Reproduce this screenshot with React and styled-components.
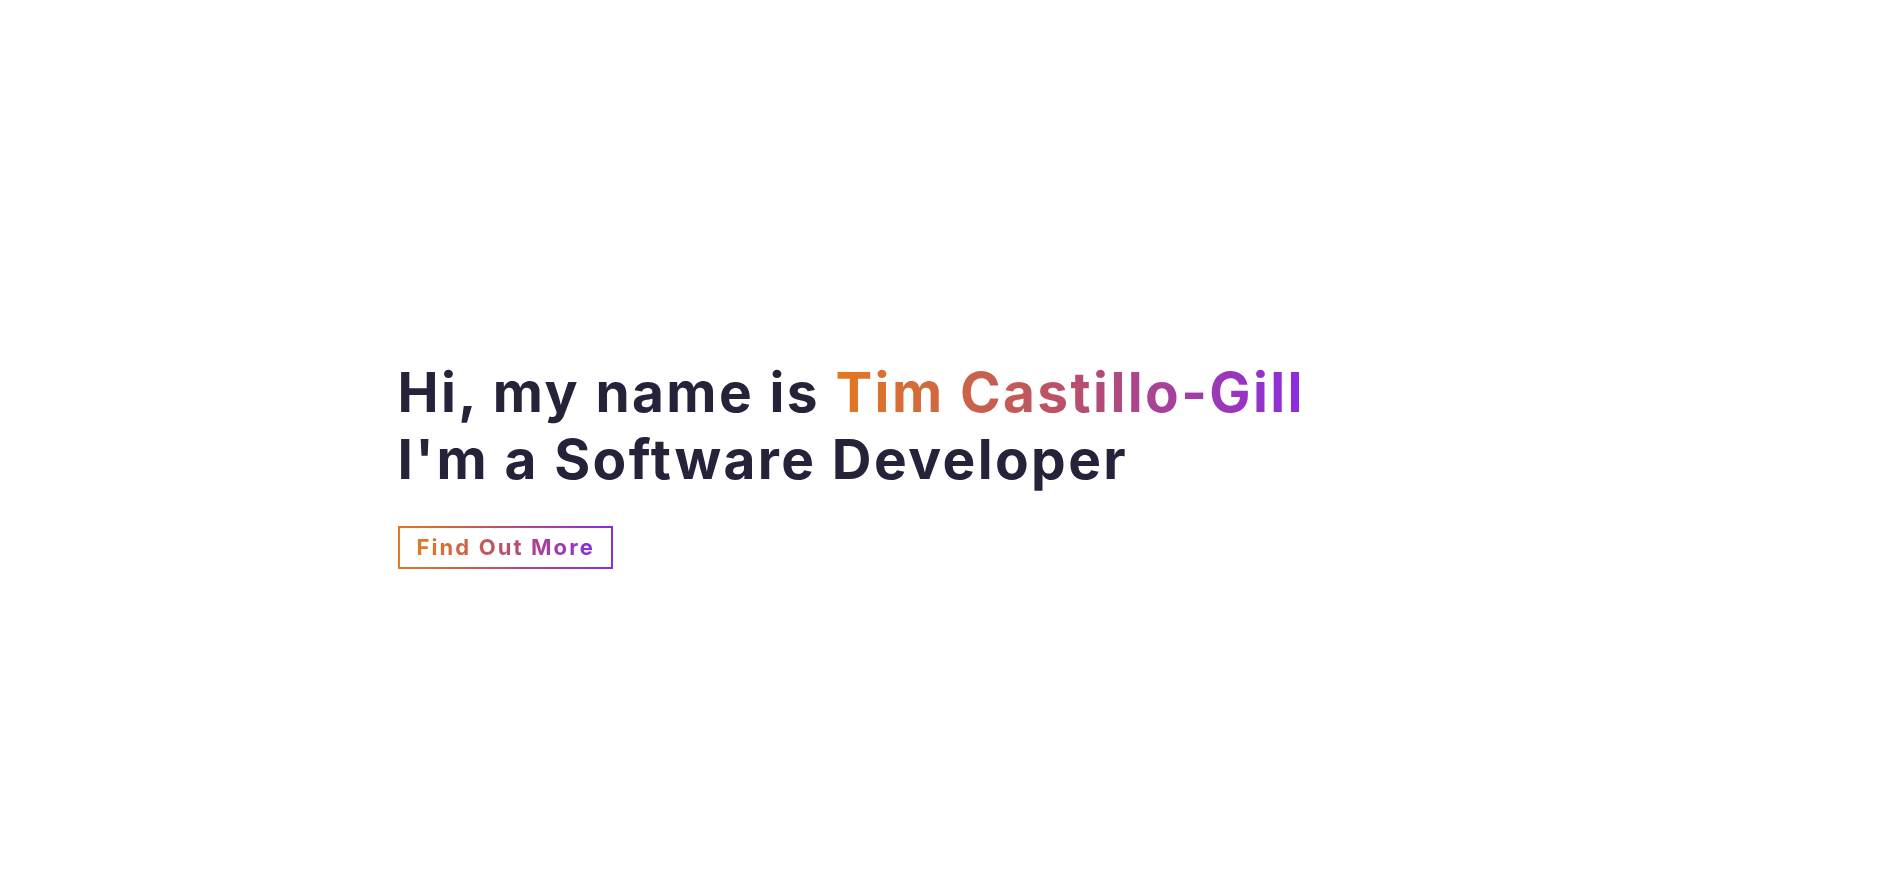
import React from "react";
import styled, { createGlobalStyle } from "styled-components";

const GlobalStyle = createGlobalStyle`
    * {
        box-sizing: border-box;
    }
    body {
        margin: 0;
        background: #ffffff;
        font-family: "Inter", "Noto Sans", sans-serif;
    }
`;

const gradient = "linear-gradient(90deg, #e3791f 0%, #b9506a 50%, #8a2be2 100%)";

const Hero = styled.section`
    min-height: 100vh;
    padding-top: 32px;
    display: flex;
    align-items: center;
`;

const Container = styled.div`
    width: 1100px;
    margin: 0 auto;
`;

const Heading = styled.h1`
    margin: 0;
    font-size: 55px;
    line-height: 67px;
    font-weight: 700;
    color: #25223a;
    letter-spacing: 2.4px;
`;

const GradientText = styled.span`
    background: ${gradient};
    -webkit-background-clip: text;
    background-clip: text;
    color: transparent;
`;

const Button = styled.button`
    margin-top: 33px;
    height: 43px;
    padding: 0 16px 0 17px;
    background: transparent;
    border: 2px solid;
    border-image: ${gradient} 1;
    font-family: inherit;
    font-size: 22px;
    font-weight: 700;
    letter-spacing: 2.1px;
    cursor: pointer;
`;

const App = () => {
    return (
        <>
        <GlobalStyle />
        <Hero>
            <Container>
                <Heading>
                    Hi, my name is <GradientText>Tim Castillo-Gill</GradientText>
                    <br />
                    I'm a Software Developer
                </Heading>
                <Button>
                    <GradientText>Find Out More</GradientText>
                </Button>
            </Container>
        </Hero>
        </>
    );
};

export default App;
